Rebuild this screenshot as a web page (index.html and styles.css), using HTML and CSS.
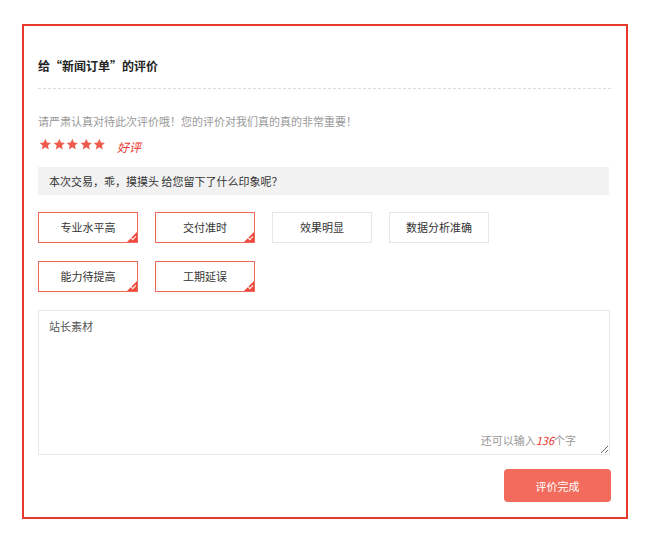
FILE: index.html
```html
<!DOCTYPE html>
<html lang="zh-CN">
<head>
<meta charset="utf-8">
<title>评价</title>
<link rel="stylesheet" href="styles.css">
</head>
<body>
<div class="panel">
  <h2 class="title">给“新闻订单”的评价</h2>
  <p class="notice">请严肃认真对待此次评价哦！您的评价对我们真的真的非常重要！</p>
  <div class="rating">
    <span class="stars">
      <svg class="star" viewBox="0 0 24 24"><path d="M12 1.5l3.1 7.1 7.6.7-5.8 5 1.8 7.5L12 17.8l-6.7 4 1.8-7.5-5.8-5 7.6-.7z"/></svg>
      <svg class="star" viewBox="0 0 24 24"><path d="M12 1.5l3.1 7.1 7.6.7-5.8 5 1.8 7.5L12 17.8l-6.7 4 1.8-7.5-5.8-5 7.6-.7z"/></svg>
      <svg class="star" viewBox="0 0 24 24"><path d="M12 1.5l3.1 7.1 7.6.7-5.8 5 1.8 7.5L12 17.8l-6.7 4 1.8-7.5-5.8-5 7.6-.7z"/></svg>
      <svg class="star" viewBox="0 0 24 24"><path d="M12 1.5l3.1 7.1 7.6.7-5.8 5 1.8 7.5L12 17.8l-6.7 4 1.8-7.5-5.8-5 7.6-.7z"/></svg>
      <svg class="star" viewBox="0 0 24 24"><path d="M12 1.5l3.1 7.1 7.6.7-5.8 5 1.8 7.5L12 17.8l-6.7 4 1.8-7.5-5.8-5 7.6-.7z"/></svg>
    </span>
    <span class="grade">好评</span>
  </div>
  <div class="question">本次交易，乖，摸摸头 给您留下了什么印象呢？</div>
  <div class="tags">
    <div class="tag-row">
      <span class="tag on">专业水平高</span>
      <span class="tag on">交付准时</span>
      <span class="tag">效果明显</span>
      <span class="tag">数据分析准确</span>
    </div>
    <div class="tag-row">
      <span class="tag on">能力待提高</span>
      <span class="tag on">工期延误</span>
    </div>
  </div>
  <div class="comment">
    <textarea class="comment-input">站长素材</textarea>
    <span class="counter">还可以输入<em>136</em>个字</span>
  </div>
  <div class="actions">
    <button class="submit" type="button">评价完成</button>
  </div>
</div>
</body>
</html>
```
FILE: styles.css
```css
html, body {
  margin: 0;
  padding: 0;
  background: #fff;
}
body {
  font-family: "Noto Sans CJK SC", "Microsoft YaHei", sans-serif;
  font-size: 11px;
  color: #333;
}
.panel {
  margin: 24px 22px 0 22px;
  width: 606px;
  box-sizing: border-box;
  border: 2px solid #e8392f;
  padding: 30px 15px 15px 14px;
}
.title {
  margin: 0;
  font-size: 12px;
  font-weight: bold;
  line-height: 20px;
  color: #222;
  padding-bottom: 12px;
  border-bottom: 1px dashed #dcdcdc;
}
.notice {
  margin: 22px 0 0 0;
  line-height: 20px;
  color: #999;
  font-size: 11px;
}
.rating {
  margin-top: 3px;
  height: 20px;
  display: flex;
  align-items: center;
}
.stars {
  display: flex;
  gap: 1px;
  margin-left: 1px;
}
.star {
  width: 12.6px;
  height: 12.6px;
  fill: #f05a4c;
}
.grade {
  margin-left: 11px;
  margin-top: 4px;
  color: #e8392f;
  font-style: italic;
  font-size: 12px;
}
.question {
  margin-top: 13px;
  height: 28px;
  line-height: 28px;
  background: #f2f2f2;
  padding-left: 11px;
  margin-right: 2px;
  font-size: 11px;
  color: #333;
}
.tags {
  margin-top: 17px;
  display: flex;
  flex-direction: column;
  gap: 18px;
}
.tag-row {
  display: flex;
  gap: 17px;
}
.tag {
  position: relative;
  box-sizing: border-box;
  width: 100px;
  height: 31px;
  line-height: 29px;
  text-align: center;
  border: 1px solid #e6e6e6;
  color: #333;
  font-size: 11px;
}
.tag.on {
  border-color: #f0685a;
}
.tag.on::after {
  content: "";
  position: absolute;
  right: 0;
  bottom: 0;
  width: 0;
  height: 0;
  border-left: 10px solid transparent;
  border-bottom: 10px solid #f0493e;
}
.tag.on::before {
  content: "";
  position: absolute;
  right: 1px;
  bottom: 3px;
  width: 4px;
  height: 2px;
  border-left: 1px solid #fff;
  border-bottom: 1px solid #fff;
  transform: rotate(-45deg);
  z-index: 1;
}
.comment {
  position: relative;
  margin-top: 18px;
  margin-right: 1px;
}
.comment-input {
  display: block;
  box-sizing: border-box;
  width: 100%;
  height: 145px;
  margin: 0;
  border: 1px solid #e6e6e6;
  padding: 6px 10px;
  font-family: "Noto Sans CJK SC", "Microsoft YaHei", sans-serif;
  font-size: 11px;
  line-height: 18px;
  color: #555;
  resize: both;
  outline: none;
}
.counter {
  position: absolute;
  right: 34px;
  bottom: 7px;
  color: #999;
  font-size: 11px;
  line-height: 16px;
}
.counter em {
  color: #e8392f;
  font-style: italic;
  font-weight: normal;
}
.actions {
  margin-top: 14px;
  display: flex;
  justify-content: flex-end;
}
.submit {
  width: 107px;
  height: 33px;
  border: 0;
  border-radius: 4px;
  background: #f26b5d;
  color: #fff;
  font-family: "Noto Sans CJK SC", "Microsoft YaHei", sans-serif;
  font-size: 11px;
  cursor: pointer;
}
```
